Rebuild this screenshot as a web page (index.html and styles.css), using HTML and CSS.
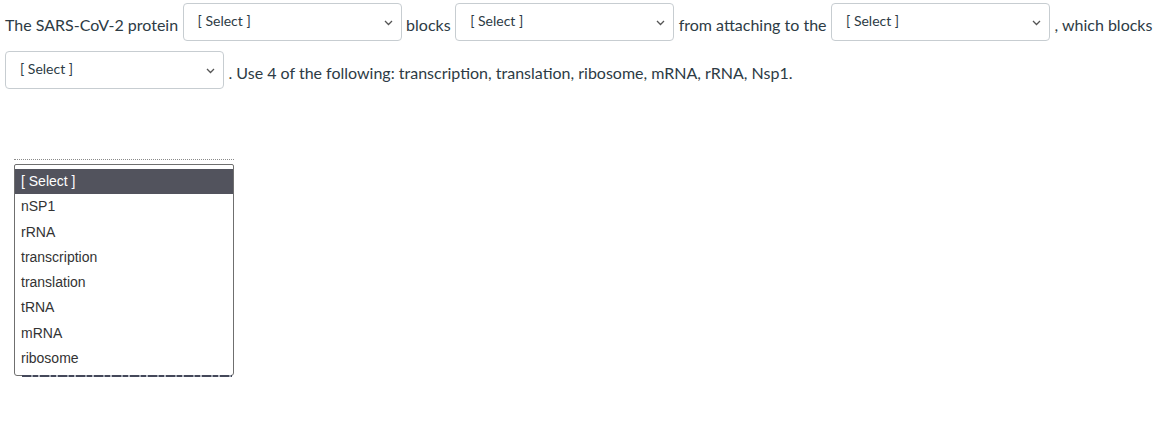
FILE: index.html
```html
<!DOCTYPE html>
<html>
<head>
<meta charset="utf-8">
<link rel="stylesheet" href="styles.css">
</head>
<body>
<div class="question">
  <div class="row row-first">
    <span class="txt">The SARS-CoV-2 protein</span>
    <span class="sel"><span class="sel-label">[ Select ]</span><svg class="chev" width="9" height="6" viewBox="0 0 9 6"><path d="M1 1 L4.5 4.5 L8 1" fill="none" stroke="#555" stroke-width="1.3"/></svg></span>
    <span class="txt">blocks</span>
    <span class="sel"><span class="sel-label">[ Select ]</span><svg class="chev" width="9" height="6" viewBox="0 0 9 6"><path d="M1 1 L4.5 4.5 L8 1" fill="none" stroke="#555" stroke-width="1.3"/></svg></span>
    <span class="txt">from attaching to the</span>
    <span class="sel"><span class="sel-label">[ Select ]</span><svg class="chev" width="9" height="6" viewBox="0 0 9 6"><path d="M1 1 L4.5 4.5 L8 1" fill="none" stroke="#555" stroke-width="1.3"/></svg></span>
    <span class="txt">, which blocks</span>
  </div>
  <div class="row">
    <span class="sel"><span class="sel-label">[ Select ]</span><svg class="chev" width="9" height="6" viewBox="0 0 9 6"><path d="M1 1 L4.5 4.5 L8 1" fill="none" stroke="#555" stroke-width="1.3"/></svg></span>
    <span class="txt">. Use 4 of the following: transcription, translation, ribosome, mRNA, rRNA, Nsp1.</span>
  </div>
</div>

<div class="popup-wrap">
  <div class="under-top"></div>
  <ul class="popup">
    <li class="opt active">[ Select ]</li>
    <li class="opt">nSP1</li>
    <li class="opt">rRNA</li>
    <li class="opt">transcription</li>
    <li class="opt">translation</li>
    <li class="opt">tRNA</li>
    <li class="opt">mRNA</li>
    <li class="opt">ribosome</li>
  </ul>
  <div class="under-bottom"></div>
</div>
</body>
</html>
```

FILE: styles.css
```css
html, body {
  margin: 0;
  padding: 0;
  background: #ffffff;
}

body {
  font-family: Lato, "Liberation Sans", sans-serif;
  color: #2d3b45;
  font-size: 16px;
}

.question {
  padding: 3px 0 0 5px;
  display: flex;
  flex-direction: column;
  gap: 10px;
}

.row {
  display: flex;
  align-items: center;
  gap: 4.5px;
}

.txt {
  line-height: 20px;
  padding-top: 6px;
  white-space: nowrap;
}

.sel {
  box-sizing: border-box;
  width: 219px;
  height: 38px;
  border: 1px solid #c7cdd1;
  border-radius: 4px;
  background: #fff;
  display: flex;
  align-items: center;
  justify-content: space-between;
  padding: 0 8px 0 14px;
  flex: none;
}

.sel-label {
  font-size: 14px;
  color: #2d3b45;
  line-height: 16px;
  margin-top: -3px;
}

.chev {
  display: block;
  margin-top: 1px;
}

.popup-wrap {
  position: absolute;
  left: 14px;
  top: 159px;
  width: 220px;
}

.under-top {
  height: 0;
  border-bottom: 1px dotted #8a8a8a;
  margin-bottom: 4px;
}

.popup {
  list-style: none;
  margin: 0;
  padding: 4px 0 4px;
  box-sizing: border-box;
  width: 220px;
  border: 1px solid #6f6f6f;
  border-radius: 2px 2px 3px 3px;
  background: #fff;
  font-family: "Liberation Sans", Arial, sans-serif;
  font-size: 14px;
  color: #333;
}

.opt {
  height: 25.3px;
  line-height: 25px;
  padding-left: 6px;
}

.opt.active {
  background: #52535d;
  color: #fff;
}

.under-bottom {
  height: 2px;
  margin: -1px 2px 0 8px;
  background: repeating-linear-gradient(90deg, #44485a 0 9px, #9aa0ab 9px 11px, #44485a 11px 16px, #b5b9c2 16px 18px);
}
```
